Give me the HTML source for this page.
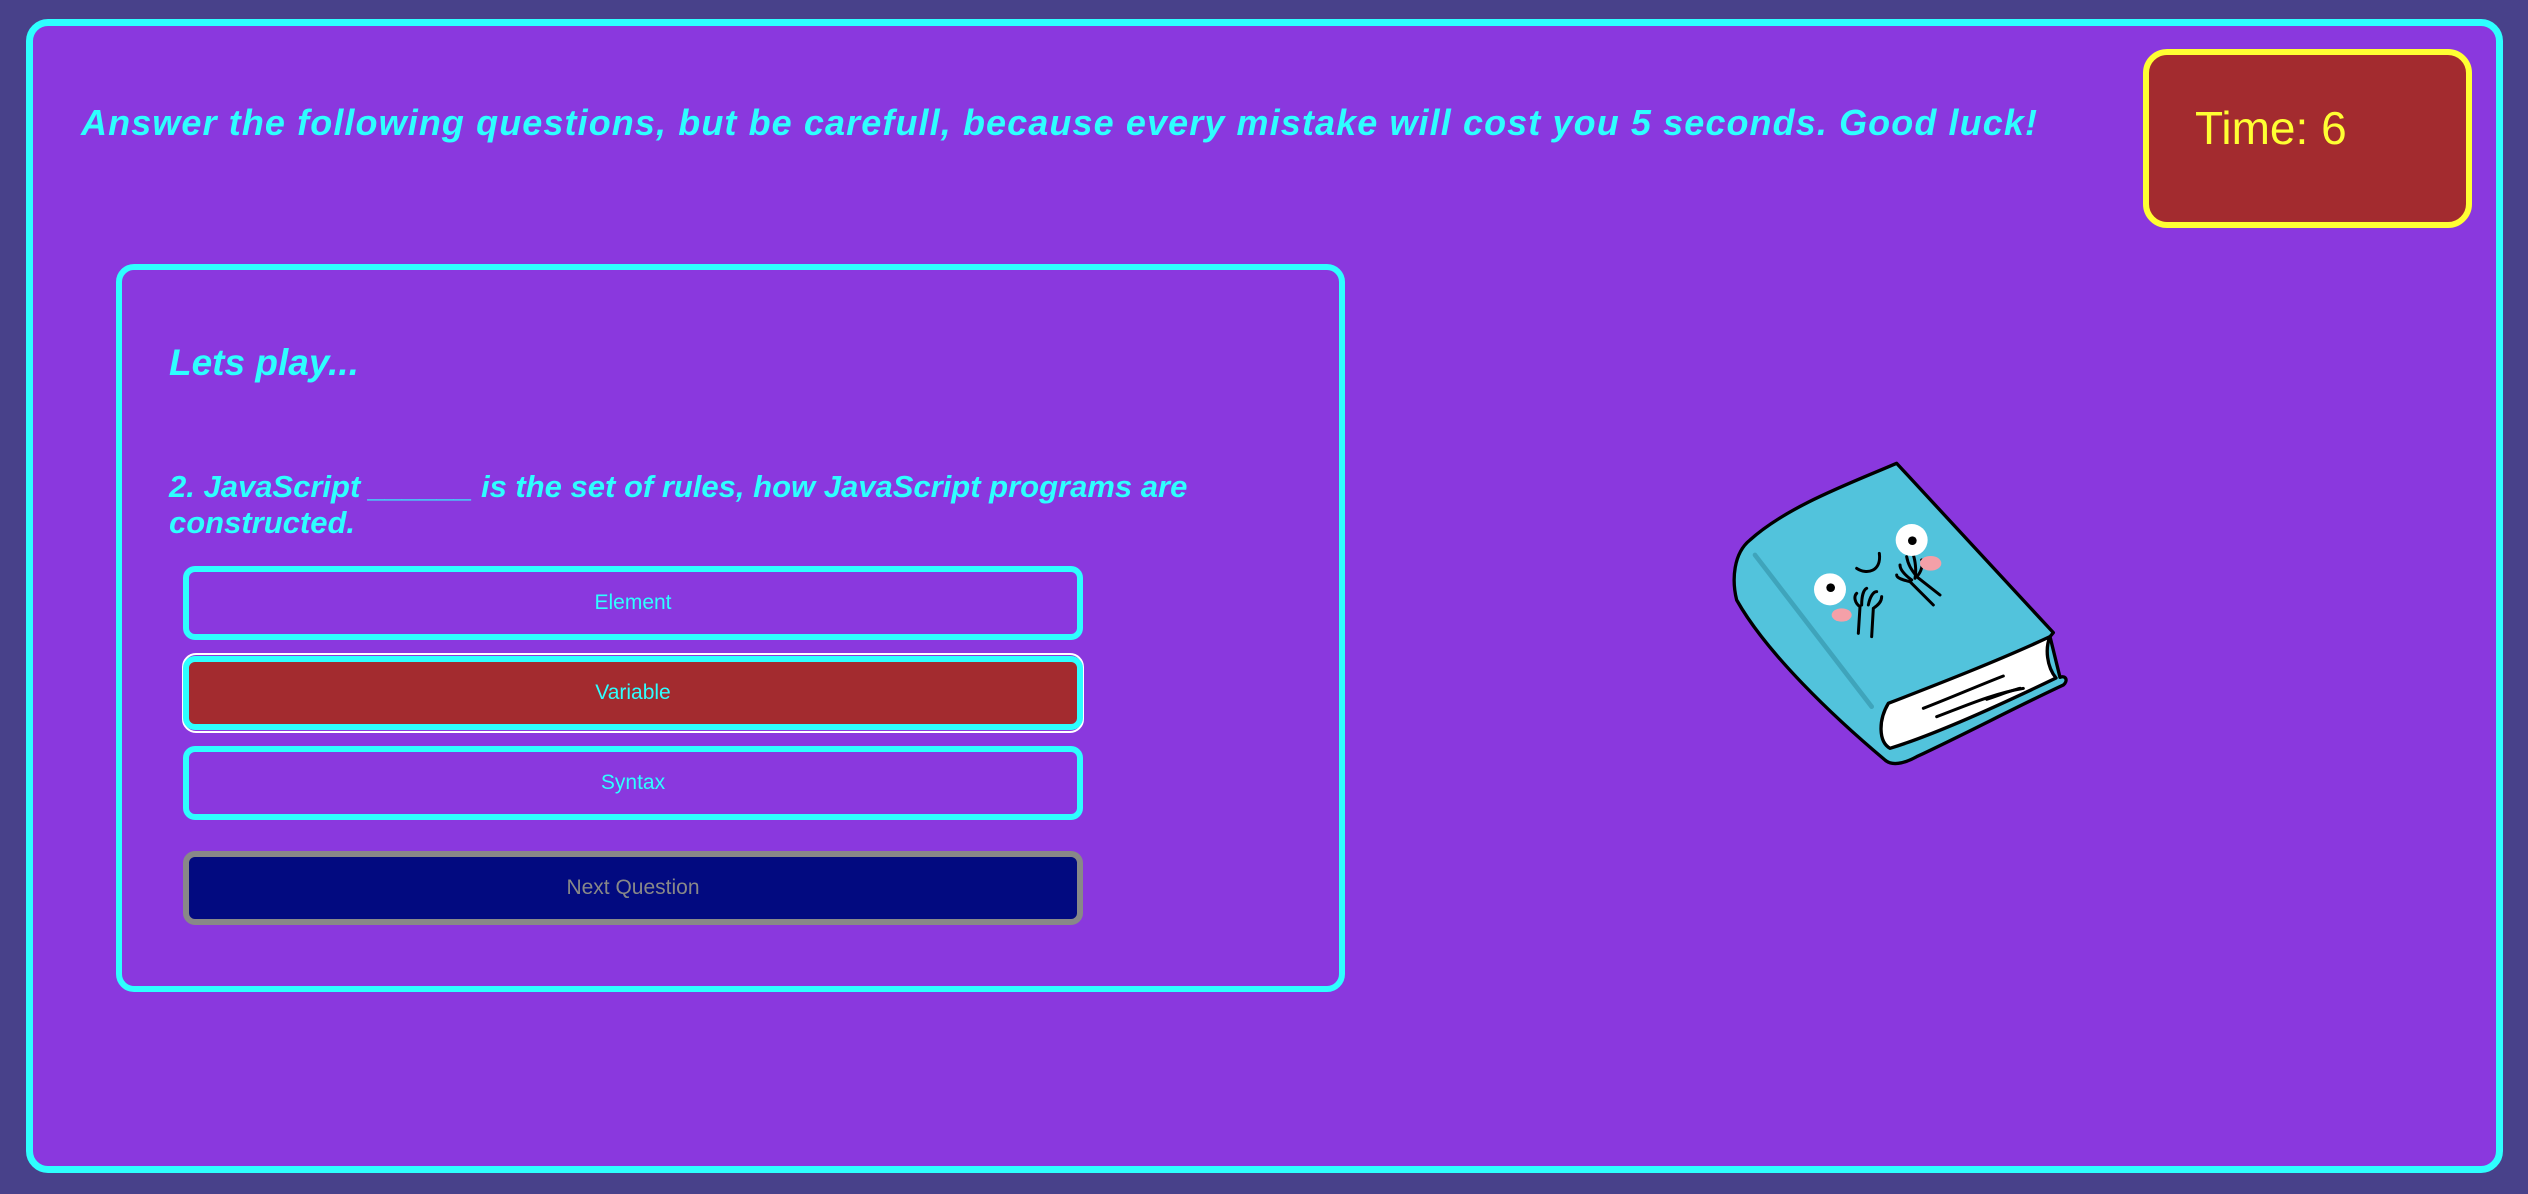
<!DOCTYPE html>
<html><head><meta charset="utf-8"><style>
html,body{margin:0;padding:0;width:2528px;height:1194px;overflow:hidden;background:#48418a;font-family:"Liberation Sans","DejaVu Sans",sans-serif;}
.abs{position:absolute;box-sizing:border-box;}
.outer{left:26px;top:19px;width:2477px;height:1154px;border:7px solid #2effff;border-radius:22px;background:#8a38de;}
.hdr{left:81px;top:102px;font-size:36px;font-weight:bold;font-style:italic;color:#2effff;white-space:nowrap;letter-spacing:1.1px;}
.timer{left:2143px;top:49px;width:329px;height:179px;border:6px solid #ffff33;border-radius:24px;background:#a32b2f;color:#ffff33;font-size:46px;}
.card{left:116px;top:264px;width:1229px;height:728px;border:6px solid #2effff;border-radius:18px;}
.t1{left:169px;top:342px;font-size:37px;font-weight:bold;font-style:italic;color:#2effff;}
.q{left:169px;top:469px;width:1090px;font-size:31px;line-height:36px;font-weight:bold;font-style:italic;color:#2effff;}
.btn{left:183px;width:900px;border:6px solid #2effff;border-radius:12px;color:#2effff;font-size:21px;display:flex;align-items:center;justify-content:center;}
</style></head><body>
<div class="abs outer"></div>
<div class="abs hdr">Answer the following questions, but be carefull, because every mistake will cost you 5 seconds. Good luck!</div>
<div class="abs timer"><span style="position:absolute;left:46px;top:46px;">Time: 6</span></div>
<div class="abs card"></div>
<div class="abs t1">Lets play...</div>
<div class="abs q">2. JavaScript ______ is the set of rules, how JavaScript programs are constructed.</div>
<div class="abs btn" style="top:566px;height:74px;">Element</div>
<div class="abs" style="left:182px;top:653px;width:902px;height:80px;border:2px solid #fff;border-radius:14px;"></div>
<div class="abs btn" style="top:656px;height:74px;background:#a32b2f;">Variable</div>
<div class="abs btn" style="top:746px;height:74px;">Syntax</div>
<div class="abs btn" style="top:851px;height:74px;background:#020a80;border-color:#888;color:#888;">Next Question</div>
<svg class="abs" style="left:1700px;top:440px" width="400" height="340" viewBox="0 0 1200 1020">
<g stroke="#000" stroke-width="10" stroke-linejoin="round" stroke-linecap="round">
<path d="M590,70 C450,130 260,200 150,300 C100,340 95,420 110,480 C200,640 400,830 555,960 C575,978 610,972 650,950 C800,880 950,800 1090,735 C1105,722 1098,705 1080,712 L1050,590 L1060,578 Z" fill="#52c3dc"/>
<path d="M565,790 C535,840 535,905 570,925 C700,885 900,795 1068,714 C1040,680 1035,625 1050,590 C900,660 720,730 565,790 Z" fill="#fff"/>
</g>
<path d="M165,345 L515,800" stroke="#3fa4bb" stroke-width="14" stroke-linecap="round"/>
<g stroke="#000" stroke-width="9" stroke-linecap="round" fill="none">
<path d="M670,805 C760,770 840,735 910,708"/>
<path d="M710,830 C790,800 880,760 970,745"/>
<path d="M860,778 C900,765 930,752 960,745"/>
<path d="M470,385 C500,405 545,395 538,340"/>
<path d="M475,580 L480,500 M515,590 L520,505 M480,500 C465,490 460,470 470,460 M485,495 C485,470 490,450 500,445 M505,495 C510,470 520,455 530,455 M520,505 C535,495 545,485 545,470"/>
<path d="M720,465 L650,410 M700,495 L630,425 M630,425 C610,420 590,415 590,405 M650,410 C640,395 625,380 620,350 M635,420 C615,405 600,390 600,375 M645,415 C650,390 645,360 640,345 M650,410 C665,395 670,370 665,360"/>
</g>
<ellipse cx="425" cy="525" rx="30" ry="20" fill="#f4a0a8"/>
<ellipse cx="692" cy="370" rx="32" ry="22" fill="#f4a0a8"/>
<circle cx="390" cy="448" r="48" fill="#fff"/><circle cx="392" cy="443" r="13" fill="#000"/>
<circle cx="635" cy="300" r="48" fill="#fff"/><circle cx="637" cy="302" r="13" fill="#000"/>
</svg>
</body></html>
